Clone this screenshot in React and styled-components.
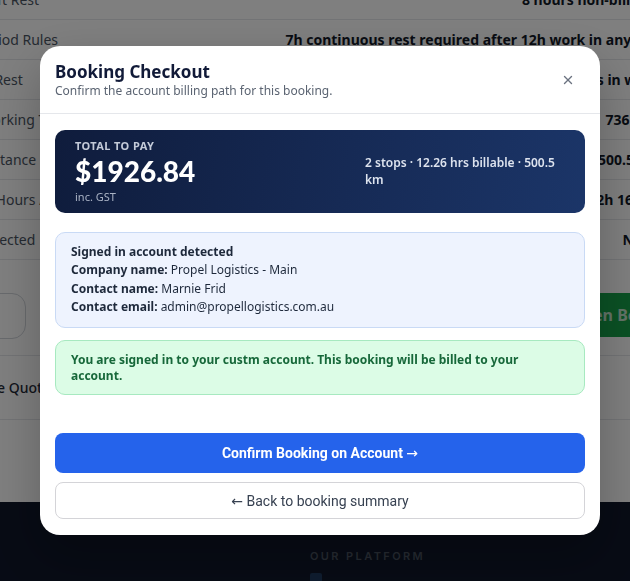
import React from "react";
import styled, { createGlobalStyle } from "styled-components";
import { X } from "lucide-react";

const GlobalStyle = createGlobalStyle`
  html, body {
    margin: 0;
    padding: 0;
    height: 100%;
    overflow: hidden;
    background: #ffffff;
    font-family: "Noto Sans", "Lato", sans-serif;
  }
  * { box-sizing: border-box; }
`;

const rows = [
  ["Post-Shift Rest", "8 hours non-billable"],
  ["Rest Period Rules", "7h continuous rest required after 12h work in any 24h"],
  ["Weekly Rest", "24h rest after 6 days in work"],
  ["Total Working Time", "736 min"],
  ["Total Distance", "500.5 km"],
  ["Billable Hours Applied", "12h 16min"],
  ["Rest Detected", "None"],
];

const App = () => {
  return (
    <>
      <GlobalStyle />
      <Page>
        <Table>
          {rows.map(([label, value]) => (
            <Row key={label}>
              <RowLabel>{label}</RowLabel>
              <RowValue>{value}</RowValue>
            </Row>
          ))}
        </Table>
        <PageActions>
          <GhostBtn>Back</GhostBtn>
          <GreenBtn>Open Booking</GreenBtn>
        </PageActions>
        <QuoteRow>
          <QuoteBtn>Save Quote</QuoteBtn>
        </QuoteRow>
        <Footer>
          <FooterCol>
            <FooterTitle>OUR PLATFORM</FooterTitle>
            <FooterIcon />
          </FooterCol>
        </Footer>
      </Page>

      <Overlay>
        <Modal>
          <ModalHeader>
            <div>
              <Title>Booking Checkout</Title>
              <Subtitle>Confirm the account billing path for this booking.</Subtitle>
            </div>
            <CloseBtn aria-label="Close">
              <X size={14} strokeWidth={2.4} />
            </CloseBtn>
          </ModalHeader>

          <ModalBody>
            <TotalCard>
              <div>
                <TotalLabel>TOTAL TO PAY</TotalLabel>
                <TotalAmount>$1926.84</TotalAmount>
                <TotalNote>inc. GST</TotalNote>
              </div>
              <TotalMeta>2 stops · 12.26 hrs billable · 500.5 km</TotalMeta>
            </TotalCard>

            <InfoBox>
              <InfoTitle>Signed in account detected</InfoTitle>
              <InfoLine>
                <b>Company name:</b> Propel Logistics - Main
              </InfoLine>
              <InfoLine>
                <b>Contact name:</b> Marnie Frid
              </InfoLine>
              <InfoLine>
                <b>Contact email:</b> admin@propellogistics.com.au
              </InfoLine>
            </InfoBox>

            <SuccessBox>
              You are signed in to your custm account. This booking will be billed to your
              account.
            </SuccessBox>

            <Actions>
              <PrimaryBtn>
                Confirm Booking on Account <Arrow>→</Arrow>
              </PrimaryBtn>
              <SecondaryBtn>
                <Arrow>←</Arrow> Back to booking summary
              </SecondaryBtn>
            </Actions>
          </ModalBody>
        </Modal>
      </Overlay>
    </>
  );
};

export default App;

// ----- background page -----

const Page = styled.div`
  margin: -20px -30px 0 -56px;
  min-height: 640px;
  display: flex;
  flex-flow: column;
`;

const Table = styled.div`
  display: flex;
  flex-flow: column;
`;

const Row = styled.div`
  height: 40px;
  display: flex;
  align-items: center;
  justify-content: space-between;
  border-bottom: 1px solid #e5e7eb;
  font-size: 14px;
`;

const RowLabel = styled.span`
  color: #4b5563;
`;

const RowValue = styled.span`
  color: #111827;
  font-weight: 700;
`;

const PageActions = styled.div`
  display: flex;
  justify-content: space-between;
  padding: 33px 0 16px 0;
  border-bottom: 1px solid #e5e7eb;
`;

const GhostBtn = styled.button`
  height: 46px;
  padding: 0 28px;
  margin-left: -12px;
  background: white;
  border: 1px solid #d1d5db;
  border-radius: 14px;
  font-family: inherit;
  font-size: 16px;
  color: #1f2937;
`;

const GreenBtn = styled.button`
  height: 44px;
  padding: 0 20px;
  margin-right: -43px;
  background: #16a34a;
  border: 0;
  border-radius: 0;
  font-family: inherit;
  font-size: 16px;
  font-weight: 700;
  color: #c7e6d0;
`;

const QuoteRow = styled.div`
  height: 64px;
  display: flex;
  align-items: center;
  border-bottom: 1px solid #e5e7eb;
`;

const QuoteBtn = styled.button`
  background: none;
  border: 0;
  padding: 0;
  margin-left: 30px;
  font-family: inherit;
  font-size: 14px;
  font-weight: 500;
  color: #1f2937;
`;

const Footer = styled.footer`
  margin-top: 82px;
  flex: 1;
  background: #0f172a;
  padding: 47px 0 0 366px;
`;

const FooterCol = styled.div`
  display: flex;
  flex-flow: column;
  row-gap: 10px;
`;

const FooterTitle = styled.div`
  font-family: "Inter", sans-serif;
  font-size: 11px;
  font-weight: 600;
  letter-spacing: 2.4px;
  color: #4b5563;
`;

const FooterIcon = styled.div`
  width: 12px;
  height: 12px;
  border-radius: 2px;
  background: #1e3a5f;
`;

// ----- modal -----

const Overlay = styled.div`
  position: fixed;
  inset: 0;
  background: rgba(0, 0, 0, 0.5);
  display: flex;
  align-items: center;
  justify-content: center;
  padding-left: 10px;
`;

const Modal = styled.div`
  width: 560px;
  background: white;
  border-radius: 20px;
  box-shadow: 0 20px 50px rgba(0, 0, 0, 0.25);
  overflow: hidden;
`;

const ModalHeader = styled.div`
  display: flex;
  justify-content: space-between;
  align-items: center;
  padding: 15px 20px 14px 15px;
  border-bottom: 1px solid #e5e7eb;
`;

const Title = styled.h2`
  margin: 0;
  font-size: 17px;
  line-height: 22px;
  font-weight: 700;
  color: #111a38;
`;

const Subtitle = styled.p`
  margin: 0;
  font-size: 12px;
  line-height: 16px;
  color: #5b6472;
`;

const CloseBtn = styled.button`
  width: 24px;
  height: 24px;
  display: flex;
  align-items: center;
  justify-content: center;
  padding: 0;
  background: none;
  border: 0;
  color: #6b7280;
  cursor: pointer;
`;

const ModalBody = styled.div`
  display: flex;
  flex-flow: column;
  padding: 16px 15px 16px;
`;

const TotalCard = styled.div`
  display: flex;
  justify-content: space-between;
  align-items: center;
  padding: 8px 20px 9px;
  border-radius: 10px;
  background: linear-gradient(100deg, #0f1c3c 0%, #162a55 55%, #1b3568 100%);
  color: white;
`;

const TotalLabel = styled.div`
  font-size: 11px;
  line-height: 15px;
  font-weight: 700;
  letter-spacing: 0.4px;
  color: #c3cad8;
`;

const TotalAmount = styled.div`
  margin-top: 2px;
  font-family: "Lato", sans-serif;
  font-size: 28px;
  line-height: 33px;
  font-weight: 900;
  color: #ffffff;
`;

const TotalNote = styled.div`
  margin-top: 1px;
  font-size: 11px;
  line-height: 15px;
  color: #aab3c5;
`;

const TotalMeta = styled.div`
  max-width: 200px;
  font-size: 12px;
  line-height: 17px;
  font-weight: 600;
  color: #dde3ee;
`;

const InfoBox = styled.div`
  margin-top: 19px;
  padding: 10px 15px 11px;
  border: 1px solid #c9daf5;
  border-radius: 10px;
  background: #eef3fe;
  color: #1e293b;
  font-size: 12px;
  line-height: 18.3px;
  b {
    font-weight: 700;
  }
`;

const InfoTitle = styled.div`
  font-weight: 700;
`;

const InfoLine = styled.div``;

const SuccessBox = styled.div`
  margin-top: 12px;
  padding: 11px 15px 10px;
  border: 1px solid #a7e9c0;
  border-radius: 10px;
  background: #dcfce6;
  color: #17683a;
  font-size: 12px;
  line-height: 16px;
  font-weight: 700;
`;

const Actions = styled.div`
  margin-top: 38px;
  display: flex;
  flex-flow: column;
  row-gap: 9px;
`;

const PrimaryBtn = styled.button`
  height: 40px;
  border: 0;
  border-radius: 8px;
  background: #2563eb;
  color: white;
  font-family: "Roboto", sans-serif;
  font-size: 14px;
  font-weight: 700;
  cursor: pointer;
`;

const SecondaryBtn = styled.button`
  height: 37px;
  border: 1px solid #d4d4d8;
  border-radius: 8px;
  background: white;
  color: #374151;
  font-family: "Roboto", sans-serif;
  font-size: 14px;
  cursor: pointer;
`;

const Arrow = styled.span`
  font-family: "DejaVu Sans", sans-serif;
  font-weight: 400;
`;
